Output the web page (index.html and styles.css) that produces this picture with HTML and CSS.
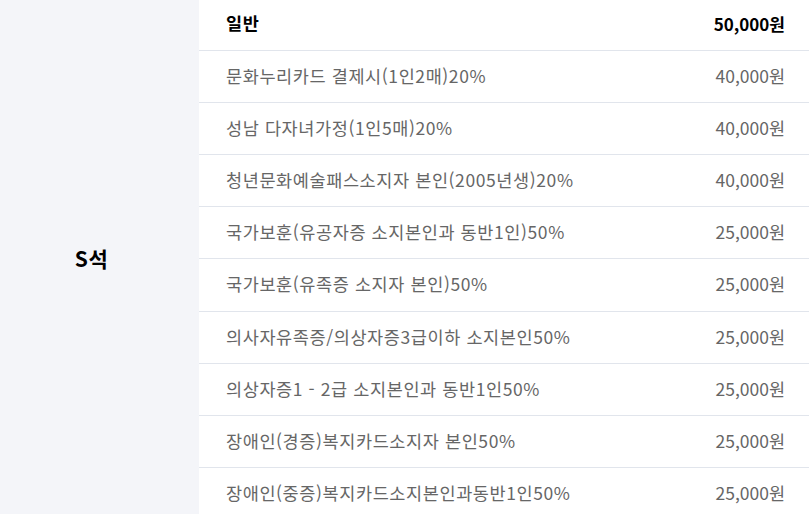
FILE: index.html
```html
<!DOCTYPE html>
<html lang="ko">
<head>
<meta charset="utf-8">
<link rel="stylesheet" href="styles.css">
</head>
<body>
<div class="price-table">
  <div class="seat">S석</div>
  <div class="rows">
    <div class="row head"><span class="name">일반</span><span class="price">50,000원</span></div>
    <div class="row"><span class="name">문화누리카드 결제시(1인2매)20%</span><span class="price">40,000원</span></div>
    <div class="row"><span class="name">성남 다자녀가정(1인5매)20%</span><span class="price">40,000원</span></div>
    <div class="row"><span class="name">청년문화예술패스소지자 본인(2005년생)20%</span><span class="price">40,000원</span></div>
    <div class="row"><span class="name">국가보훈(유공자증 소지본인과 동반1인)50%</span><span class="price">25,000원</span></div>
    <div class="row"><span class="name">국가보훈(유족증 소지자 본인)50%</span><span class="price">25,000원</span></div>
    <div class="row"><span class="name">의사자유족증/의상자증3급이하 소지본인50%</span><span class="price">25,000원</span></div>
    <div class="row"><span class="name">의상자증1 - 2급 소지본인과 동반1인50%</span><span class="price">25,000원</span></div>
    <div class="row"><span class="name">장애인(경증)복지카드소지자 본인50%</span><span class="price">25,000원</span></div>
    <div class="row"><span class="name">장애인(중증)복지카드소지본인과동반1인50%</span><span class="price">25,000원</span></div>
  </div>
</div>
</body>
</html>
```
FILE: styles.css
```css
html, body {
  margin: 0;
  padding: 0;
  background: #fff;
  overflow: hidden;
}
body {
  font-family: "Noto Sans CJK KR", "Noto Sans", sans-serif;
  font-size: 17.5px;
  color: #666;
}
.price-table {
  display: flex;
  width: 809px;
}
.seat {
  width: 199px;
  box-sizing: border-box;
  padding: 0 16px 4px 0;
  flex: none;
  background: #f4f5f9;
  display: flex;
  align-items: center;
  justify-content: center;
  font-weight: 700;
  color: #000;
  font-size: 21px;
  letter-spacing: 0.5px;
}
.rows {
  flex: 1;
  display: flex;
  flex-direction: column;
}
.row {
  box-sizing: border-box;
  height: 52px;
  border-bottom: 1px solid #e1e5ec;
  display: flex;
  align-items: center;
  justify-content: space-between;
  padding: 0 24px 2px 27px;
  line-height: 1;
}
.row.head {
  height: 51px;
  padding-bottom: 4px;
  font-weight: 700;
  color: #000;
}
.row.head .price { font-size: 17px; }
.row:nth-child(6) { height: 53px; }
.name { letter-spacing: 0.6px; }
.price { text-align: right; }
```
